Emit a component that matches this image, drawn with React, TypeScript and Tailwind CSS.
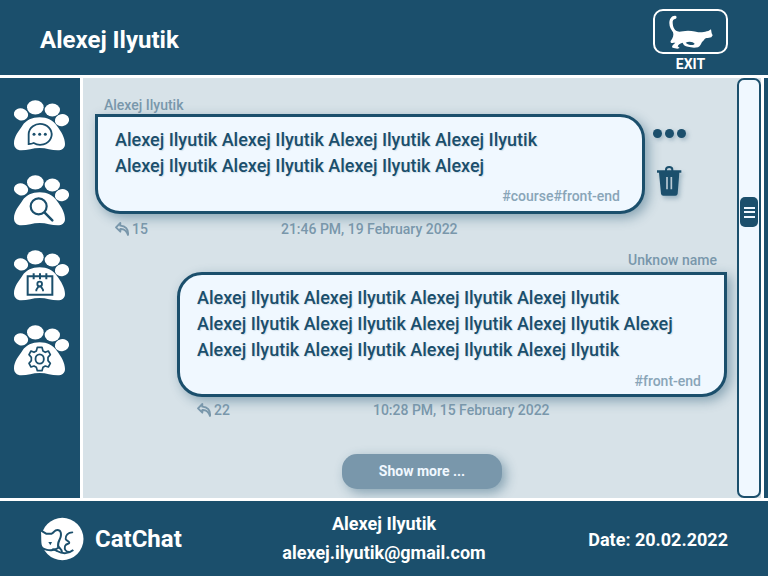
import React from "react";

function Paw({ children }: { children: React.ReactNode }) {
  return (
    <svg className="h-[50px] w-[56px] overflow-visible" viewBox="42 44 168 150" fill="none">
      <g fill="#fff">
        <ellipse cx="63" cy="87" rx="21.5" ry="18" transform="rotate(15 63 87)" />
        <ellipse cx="106" cy="66" rx="25" ry="21.5" />
        <ellipse cx="157" cy="74" rx="23" ry="19.5" />
        <ellipse cx="186" cy="104.500" rx="21.500" ry="18" transform="rotate(-12 186 104.5)" />
        <path d="M119 96C96 96 79 104 67 121C57 136 42 153 42 174C42 187 50 195 64 195C82 195 99 188 119 188C139 188 155 195 173 195C186 195 195 188 195 176C195 157 183 138 171 122C160 106 142 96 119 96Z" />
      </g>
      <g stroke="#1b4f6c" fill="none">{children}</g>
    </svg>
  );
}

function ChatIcon() {
  return (
    <Paw>
      <path d="M86 147A34.500 31.500 0 1 1 101 173Q95 176 86 176Z" strokeWidth="5.500" />
      <g fill="#1b4f6c" stroke="none">
        <circle cx="102" cy="147" r="4.500" />
        <circle cx="119" cy="147" r="4.500" />
        <circle cx="136" cy="147" r="4.500" />
      </g>
    </Paw>
  );
}

function SearchIcon() {
  return (
    <Paw>
      <circle cx="116" cy="138" r="24" strokeWidth="6.500" />
      <path d="M134 157L157 180" strokeWidth="7.500" strokeLinecap="round" />
    </Paw>
  );
}

function CalendarIcon() {
  return (
    <Paw>
      <path d="M83 123H157V178H83ZM101 114V132M120 114V132M139 114V132" strokeWidth="6" />
      <circle cx="119" cy="146" r="7" strokeWidth="5.500" />
      <path d="M109 168V163L115 154H123L129 163V168" strokeWidth="5.500" />
    </Paw>
  );
}

function GearIcon() {
  return (
    <Paw>
      <path
        strokeWidth="5"
        strokeLinejoin="round"
        d="M112 111H126L129 122L136 126L145 122L151 133L144 141V151L151 159L145 170L136 167L129 171L126 181H112L109 171L102 167L93 170L87 159L94 151V141L87 133L93 122L102 126L109 122Z"
      />
      <ellipse cx="119" cy="146" rx="12.500" ry="14" strokeWidth="5.500" />
    </Paw>
  );
}

function RunningCat() {
  return (
    <svg className="h-[34px] w-[44px]" viewBox="85 43 132 102" fill="#fff">
      <path d="M104 45C93 44 86 55 86 67C86 80 92 87 97 95C100 103 97 113 90 121C88 126 93 129 99 126L104 126C98 132 91 137 96 141L110 144L117 142L111 137C113 131 120 128 126 126C128 133 133 137 142 138L160 141L172 140C179 136 182 129 184 124C188 121 190 118 192 115C197 111 199 112 205 111L212 110L216 104L213 98L211 86L203 91C196 91 192 95 184 95C168 95 157 90 142 90C127 90 119 95 110 92C100 88 97 78 96 67C95 59 99 55 104 55C109 53 109 46 104 45Z" />
      <path d="M135 126C143 121 157 122 162 129C160 135 143 134 135 126Z" fill="#1b4f6c" />
    </svg>
  );
}

function Logo() {
  return (
    <svg className="h-[44px] w-[44px]" viewBox="31 79 132 132" fill="none">
      <circle cx="98" cy="145" r="63.500" fill="#fff" />
      <path
        d="M34 123L49 132H66C74 130 76 121 83 121C91 121 92 130 90 138C87 148 80 154 83 170C76 176 57 178 44 172C32 166 36 150 34 123Z"
        fill="#fff"
        stroke="#1b4f6c"
        strokeWidth="12"
        style={{ paintOrder: "stroke" }}
      />
      <path d="M85 164C86 173 98 174 97 186" stroke="#1b4f6c" strokeWidth="6" />
      <path d="M128 125C115 125 107 134 108 145C109 151 119 150 119 156C119 161 110 157 106 166C103 177 109 183 118 184" stroke="#1b4f6c" strokeWidth="5.500" strokeLinecap="round" />
      <path d="M68 176C74 176 76 178 82 181C98 190 116 190 131 178" stroke="#1b4f6c" strokeWidth="6" />
      <path d="M56 154H67L62 164Z" fill="#1b4f6c" />
    </svg>
  );
}

function ReplyIcon() {
  return (
    <svg className="h-[14px] w-[14px]" viewBox="90 396 42 42" fill="none" stroke="#7997ab" strokeWidth="5.500" strokeLinejoin="round">
      <path d="M106 399L93 412L106 425V417C118 416 125 423 129 435C131 417 121 408 106 407Z" />
    </svg>
  );
}

function TrashIcon() {
  return (
    <svg
      className="mt-[28px] ml-[4px] h-[30px] w-[24px] overflow-visible drop-shadow-[2px_3px_2px_rgba(27,79,108,0.3)]"
      viewBox="52 288 72 90"
    >
      <path d="M79 303V299C79 288 98 288 98 299V303" fill="none" stroke="#1b4f6c" strokeWidth="6" />
      <path d="M52 301H125V308H119L114 371Q113 377 107 377H71Q65 377 64 371L58 308H52Z" fill="#1b4f6c" />
      <path d="M82 321V358M95 321V358" stroke="#b9cad4" strokeWidth="5" />
    </svg>
  );
}

const shade = "shadow-[4px_4px_12px_rgba(27,79,108,0.42)]";

function Meta({ count, date, gap }: { count: string; date: string; gap: string }) {
  return (
    <div className="flex h-[30px] items-center text-[14px] font-medium text-[#7997ab]">
      <ReplyIcon />
      <span className="ml-[3px]">{count}</span>
      <span className={gap}>{date}</span>
    </div>
  );
}

export default function App() {
  return (
    <div className="flex h-[576px] w-[768px] flex-col overflow-hidden bg-white font-[Roboto,sans-serif] whitespace-nowrap text-[#1b4f6c]">
      <header className="flex h-[75px] shrink-0 justify-between bg-[#1b4f6c] pr-10 pl-10 text-white">
        <h1 className="pt-[22px] text-[24px] leading-[36px] font-bold">Alexej Ilyutik</h1>
        <div className="flex w-[75px] flex-col items-center pt-[9px]">
          <button className="flex h-[45px] w-[75px] items-center justify-center rounded-[10px] border-2 border-white">
            <RunningCat />
          </button>
          <span className="text-[14px] leading-[20px] font-bold">EXIT</span>
        </div>
      </header>

      <div className="mt-[3px] flex h-[420px] shrink-0">
        <nav className="flex w-20 flex-col gap-[25px] bg-[#1b4f6c] pt-[22px] pl-[14px]">
          <ChatIcon />
          <SearchIcon />
          <CalendarIcon />
          <GearIcon />
        </nav>

        <main className="ml-[3px] flex w-[654px] flex-col overflow-hidden bg-[#d7e2e8] pt-[18px] pl-3">
          <div className="flex">
            <section className="w-[550px]">
              <p className="h-[18px] pl-[9px] text-[14px] leading-[18px] font-medium text-[#7997ab]">Alexej Ilyutik</p>
              <article className={`h-[100px] rounded-[25px] rounded-tl-none border-[3px] border-[#1b4f6c] bg-[#f0f8ff] pt-[10px] pr-[22px] pl-[17px] ${shade}`}>
                <p className="text-[18px] leading-[26px] font-medium [text-shadow:1px_1px_1px_rgba(27,79,108,0.15)]">
                  Alexej Ilyutik Alexej Ilyutik Alexej Ilyutik Alexej Ilyutik
                  <br />
                  Alexej Ilyutik Alexej Ilyutik Alexej Ilyutik Alexej
                </p>
                <p className="mt-[7px] text-right text-[14px] leading-[20px] font-medium text-[#89a5b8]">#course#front-end</p>
              </article>
              <div className="pl-5">
                <Meta count="15" date="21:46 PM, 19 February 2022" gap="ml-[133px]" />
              </div>
            </section>
            <div className="ml-2 pt-[33px]">
              <div className="flex gap-[3.500px] drop-shadow-[2px_2px_2px_rgba(27,79,108,0.3)]">
                <i className="h-[8.500px] w-[8.500px] rounded-full bg-[#1b4f6c]" />
                <i className="h-[8.500px] w-[8.500px] rounded-full bg-[#1b4f6c]" />
                <i className="h-[8.500px] w-[8.500px] rounded-full bg-[#1b4f6c]" />
              </div>
              <TrashIcon />
            </div>
          </div>

          <section className="mt-[7px] ml-[82px] w-[550px]">
            <p className="h-[21px] pr-[10px] text-right text-[14px] leading-[18px] font-medium text-[#7997ab]">Unknow name</p>
            <article className={`h-[125px] rounded-[25px] rounded-tr-none border-[3px] border-[#1b4f6c] bg-[#f0f8ff] pt-[10px] pr-[23px] pl-[17px] ${shade}`}>
              <p className="text-[18px] leading-[26px] font-medium [text-shadow:1px_1px_1px_rgba(27,79,108,0.15)]">
                Alexej Ilyutik Alexej Ilyutik Alexej Ilyutik Alexej Ilyutik
                <br />
                Alexej Ilyutik Alexej Ilyutik Alexej Ilyutik Alexej Ilyutik Alexej
                <br />
                Alexej Ilyutik Alexej Ilyutik Alexej Ilyutik Alexej Ilyutik
              </p>
              <p className="mt-[8px] text-right text-[14px] leading-[20px] font-medium text-[#89a5b8]">#front-end</p>
            </article>
            <div className="-mt-[2px] pl-5">
              <Meta count="22" date="10:28 PM, 15 February 2022" gap="ml-[143px]" />
            </div>
          </section>

          <button className={`mt-[29px] ml-[247px] h-[35px] w-[160px] shrink-0 rounded-[15px] bg-[#7997ab] text-[14px] font-bold text-[#f0f8ff] ${shade}`}>
            Show more ...
          </button>
        </main>

        <div className="flex w-6 bg-[#d7e2e8]">
          <div className="w-6 rounded-[7px] border-2 border-[#1b4f6c] bg-[#f0f8ff] pt-[117px] pl-[1px]">
            <div className="flex h-[30px] w-[18px] flex-col items-center justify-center gap-[2.500px] rounded-[5px] bg-[#1b4f6c]">
              <i className="h-[2px] w-[11px] bg-[#f0f8ff]" />
              <i className="h-[2px] w-[11px] bg-[#f0f8ff]" />
              <i className="h-[2px] w-[11px] bg-[#f0f8ff]" />
            </div>
          </div>
        </div>
        <div className="ml-[3px] w-1 bg-[#1b4f6c]" />
      </div>

      <footer className="mt-[3px] grid h-[75px] shrink-0 grid-cols-3 items-center bg-[#1b4f6c] px-10 text-white">
        <div className="flex items-center gap-[11px]">
          <Logo />
          <span className="text-[24px] font-bold">CatChat</span>
        </div>
        <div className="pb-[2px] text-center text-[18px] leading-[29px] font-bold">
          <p>Alexej Ilyutik</p>
          <p>alexej.ilyutik@gmail.com</p>
        </div>
        <p className="pt-[2px] text-right text-[18px] font-bold">Date: 20.02.2022</p>
      </footer>
    </div>
  );
}
